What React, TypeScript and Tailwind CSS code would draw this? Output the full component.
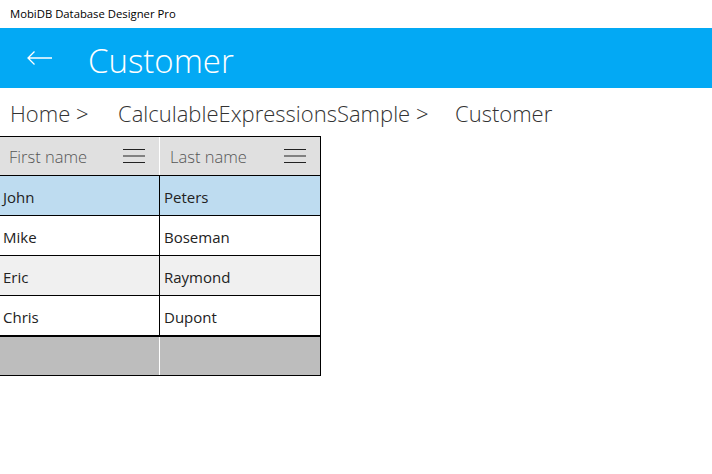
import React from "react";

const font = { fontFamily: '"Open Sans", "Noto Sans", sans-serif' };

function Hamburger() {
  return (
    <svg width="22" height="14" viewBox="0 0 22 14" className="block">
      <line x1="0" y1="0.5" x2="22" y2="0.5" stroke="#222" strokeWidth="1" />
      <line x1="0" y1="7" x2="22" y2="7" stroke="#222" strokeWidth="1" />
      <line x1="0" y1="13.5" x2="22" y2="13.5" stroke="#222" strokeWidth="1" />
    </svg>
  );
}

const rows = [
  { f: "John", l: "Peters", bg: "bg-[#bedcf0]" },
  { f: "Mike", l: "Boseman", bg: "bg-white" },
  { f: "Eric", l: "Raymond", bg: "bg-[#f0f0f0]" },
  { f: "Chris", l: "Dupont", bg: "bg-white" },
];

export default function App() {
  return (
    <div className="w-[712px] h-[474px] bg-white overflow-hidden" style={font}>
      <div className="h-[28px] flex items-center pl-[10px] text-[11.3px] text-black">
        MobiDB Database Designer Pro
      </div>
      <div className="h-[60px] bg-[#03a9f4] flex items-center">
        <div className="w-[88px] pl-[27px] flex items-center">
          <svg width="26" height="14" viewBox="0 0 26 14">
            <path d="M1 7 H25 M7.5 0.5 L1 7 L7.5 13.5" stroke="white" strokeWidth="1.3" fill="none" />
          </svg>
        </div>
        <div className="text-white text-[33px] font-light leading-none mt-[4px]">Customer</div>
      </div>
      <div className="h-[48px] flex items-center pl-[10px] text-[22px] font-light text-[#333] pt-[2px]">
        <span className="w-[108px]">Home &gt;</span>
        <span className="w-[337px]">CalculableExpressionsSample &gt;</span>
        <span>Customer</span>
      </div>
      <div className="w-[321px] border-t border-r border-black">
        <div className="h-[39px] flex bg-[#e0e0e0] border-b border-black">
          <div className="w-[160px] border-r border-white flex items-center pl-[9px] pr-[14px] justify-between">
            <span className="text-[16.5px] font-light text-[#555] pt-[2px]">First name</span>
            <Hamburger />
          </div>
          <div className="flex-1 flex items-center pl-[10px] pr-[14px] justify-between">
            <span className="text-[16.5px] font-light text-[#555] pt-[2px]">Last name</span>
            <Hamburger />
          </div>
        </div>
        {rows.map((r, i) => (
          <div
            key={r.f}
            className={
              i === rows.length - 1
                ? `h-[41px] flex border-b-2 border-black text-[15px] text-[#222] ${r.bg}`
                : `h-[40px] flex border-b border-black text-[15px] text-[#222] ${r.bg}`
            }
          >
            <div className="w-[160px] border-r border-black flex items-center pl-[3px] pt-[3px]">{r.f}</div>
            <div className="flex-1 flex items-center pl-[4px] pt-[3px]">{r.l}</div>
          </div>
        ))}
        <div className="h-[39px] flex bg-[#bdbdbd] border-b border-black">
          <div className="w-[160px] border-r border-white" />
          <div className="flex-1" />
        </div>
      </div>
    </div>
  );
}
